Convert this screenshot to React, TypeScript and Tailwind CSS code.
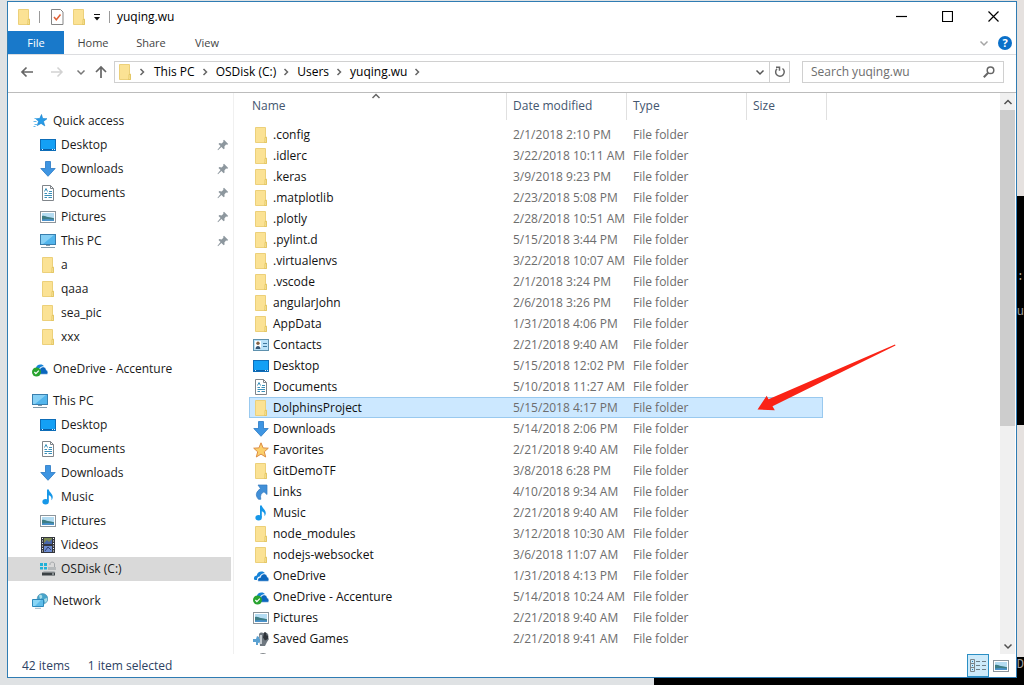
import React from "react";

type IconName =
  | "folder"
  | "desktop"
  | "downloads"
  | "documents"
  | "pictures"
  | "pc"
  | "star"
  | "favorites"
  | "onedrive"
  | "onedriveSync"
  | "music"
  | "videos"
  | "disk"
  | "network"
  | "contacts"
  | "links"
  | "games"
  | "search";

const cloud = (
  <>
    <path d="M1 11.5C.6 9 2.200 7.500 3.800 7.400 4.200 4.500 7 2.800 9.700 3.600c1 .3 1.800 .9 2.300 1.600-2.600-.2-4.600 1.200-5.200 3.300C4.900 8.800 3.900 10 4 12H2.200Z" fill="#1683d8" />
    <path d="M5 13.200c-.7-1.700 .3-3.600 2.500-3.700C7.900 7 9.700 5.800 11.600 6.100c1.600 .3 2.500 1.500 2.600 3 1.700 .5 2.200 2.900 1.100 4.100Z" fill="#0b66bd" stroke="#fff" strokeWidth=".4" />
  </>
);

const drawings: Record<IconName, React.ReactNode> = {
  folder: (
    <>
      <path d="M2.500.5h10v9.500h1v5.500h-11Z" fill="#fbe294" stroke="#ecd07a" />
      <path d="M12 10.500h1.500v5h-2l.5-1.500Z" fill="#fdeaa6" stroke="#dfc25c" strokeWidth=".8" />
    </>
  ),
  desktop: (
    <>
      <rect x=".5" y="2.500" width="15" height="11" fill="#14a0f5" stroke="#0d6db8" />
      <path d="M1 12.500h14" stroke="#0a5fa8" />
      <path d="M2 12.500h1M12 12.500h1M14 12.500h1" stroke="#d5efff" />
    </>
  ),
  downloads: <path d="M5.500.5h5v7h4.700L8 15.300.8 7.500h4.700Z" fill="#3e95e2" stroke="#2878c4" strokeWidth=".8" />,
  documents: (
    <>
      <path d="M2.500.5h8l3 3v12h-11Z" fill="#fff" stroke="#80858a" />
      <path d="M10.500.5v3h3" fill="none" stroke="#80858a" />
      <path d="M4.500 6.500 6 3.500 7.500 6.500M9 6.500h3M4.500 8.500h2.500M8.500 8.500H12M4.500 10.500h7.500M4.500 12.500h2.500M8.500 12.500H12" fill="none" stroke="#3b8fb8" />
    </>
  ),
  pictures: (
    <>
      <rect x=".5" y="2.500" width="15" height="11" fill="#fff" stroke="#8c959c" />
      <rect x="2" y="4" width="12" height="8" fill="#b4dcf2" />
      <path d="M2 7c2-1 4 .5 6 1 2 .2 4 .8 6 1.200V12H2Z" fill="#3d7d85" />
      <path d="M2 10.500c4-.9 8-.6 12 0V12H2Z" fill="#4b93cc" />
    </>
  ),
  pc: (
    <>
      <rect x=".5" y="1.500" width="15" height="10" fill="#52b5ec" stroke="#397fae" />
      <path d="M1 2h13L3 11H1Z" fill="#86d0f5" />
      <path d="M6 12.500h4M1 14.500h14" stroke="#8299a8" />
    </>
  ),
  star: (
    <>
      <path d="m9.500 1.500 1.200 4 4.300.2-3.500 2.700 1.300 4.500-3.700-2.500-3.900 2.200 1.400-4.300-3-2.700 4.100-.1Z" fill="#269be8" stroke="#187fca" strokeWidth=".6" />
      <path d="M2.500 5.500h3M1.500 8.500h3M2.500 11.500h3M1.500 13.500h2" stroke="#65b8ec" />
    </>
  ),
  favorites: <path d="m8 .8 2.100 5.100 5.200.3-4 3.600 1.400 5.200L8 12.100 3.300 15l1.400-5.200-4-3.600 5.200-.3Z" fill="#fbd06b" stroke="#dd8d43" />,
  onedrive: cloud,
  onedriveSync: (
    <>
      {cloud}
      <circle cx="4.500" cy="11" r="4.500" fill="#28a32f" />
      <path d="m2.400 11 1.500 1.700 2.900-3" fill="none" stroke="#fff" strokeWidth="1.200" />
    </>
  ),
  music: (
    <>
      <path d="M7 .5h1.800c.3 3 4.500 4.200 3.900 8.200-.2 1.100-.7 2-1.300 2.500.6-3-.9-4.300-2.600-4.900v6.200H7Z" fill="#1697e8" />
      <ellipse cx="5.600" cy="12.700" rx="3.200" ry="2.700" fill="#1697e8" />
    </>
  ),
  videos: (
    <>
      <rect x="1" y="0" width="14" height="16" fill="#34363d" />
      <path d="M2.500 1v14M13.500 1v14" stroke="#fff" strokeDasharray="1 1.500" />
      <rect x="4" y="1" width="8" height="6" fill="#7c8a52" />
      <path d="M4 6l3-3 2 2 3-3v5H4Z" fill="#4a66a8" />
      <rect x="4" y="9" width="8" height="6" fill="#6d8bd0" />
      <path d="m5 14 3-4 3 3" fill="none" stroke="#33406b" />
    </>
  ),
  disk: (
    <>
      <path d="M0 2h3v3H0ZM4 2h3v3H4ZM0 6h3v2.500H0ZM4 6h3v2.500H4Z" fill="#22b1d8" />
      <path d="M10 4V3c0-2.500 4.500-2.500 4.500 0v3" fill="none" stroke="#a2a6a9" />
      <rect x="8" y="6" width="8" height="3" fill="#b5b9bb" />
      <path d="M2 11.500 4 10h10l2 1.500Z" fill="#b2b6b8" />
      <rect x="2" y="11.500" width="13" height="3" fill="#3b4144" />
      <path d="M12 13h2" stroke="#d3dadd" />
    </>
  ),
  network: (
    <>
      <circle cx="10.500" cy="5.800" r="5.300" fill="#48a5cb" stroke="#4a8dad" strokeWidth=".6" />
      <path d="M7 2.500c2-2 4 0 3 2.500L8 6ZM12 6l3-1v3l-2 2Z" fill="#a8dde8" />
      <path d="M.5 6.500h11v7H.5Z" fill="#5fbdea" stroke="#2d89bb" />
      <path d="M1 7h8l-6 6H1Z" fill="#8ad6f5" />
      <path d="M3 15.300h6" stroke="#9ab4c2" />
    </>
  ),
  contacts: (
    <>
      <rect x=".5" y="2.500" width="15" height="11" fill="#b9e2f8" stroke="#5e91ae" />
      <rect x="2" y="4" width="6" height="8" fill="#fff" />
      <circle cx="5" cy="6.300" r="1.700" fill="#826346" />
      <path d="M2.500 12c0-4 5-4 5 0Z" fill="#355675" />
      <path d="M10 6.500h4M10 9.500h4" stroke="#3f789e" />
    </>
  ),
  links: <path d="M5 1h9v9.500l-3-2.700c-3 1.200-4 3.800-3.200 7.500H5.500C1.500 11 3.600 7.300 7.500 4.600Z" fill="#418fd7" stroke="#3179be" strokeWidth=".7" />,
  games: (
    <>
      <path d="M6 3c2-3 5-1 6 0l2-1 1.500 2-1 2 1.500 2-2 3-2 4H7Z" fill="#6f7880" />
      <path d="M11 1.500c3-1 3 2 2 3 3-1 3 3 1 4l-2 1-2-3Z" fill="#2f343a" />
      <path d="M0 8h3l1-3 2 1v2l2-1v4l-3 1v2H3v-3H0Z" fill="#5aa0d0" />
      <path d="M7 4h2v9H7Z" fill="#c5cbd0" />
    </>
  ),
  search: <circle cx="10" cy="7.500" r="6" fill="#f4f8fa" stroke="#80868a" />,
};

function Icon({ name }: { name: IconName }) {
  return (
    <svg viewBox="0 0 16 16" className="size-4 shrink-0" aria-hidden="true">
      {drawings[name]}
    </svg>
  );
}

function Chevron({ dir, className = "" }: { dir: "up" | "down" | "right"; className?: string }) {
  const d = { up: "M1.500 7 5 3.500 8.500 7", down: "M1.500 3.500 5 7 8.500 3.500", right: "M3.500 2 6.500 5 3.500 8" }[dir];
  return (
    <svg viewBox="0 0 10 10" className={`size-[10px] shrink-0 ${className}`} fill="none" stroke="currentColor" strokeWidth="1.500" aria-hidden="true">
      <path d={d} />
    </svg>
  );
}

function Pin() {
  return (
    <svg viewBox="0 0 12 12" className="size-3 shrink-0" aria-hidden="true">
      <path d="m7 .8 4.200 4.200-1 .8-1.200-.2-1.600 1.800.2 2.100-.9.8-2.300-2.300L1 11.200l-.5-.4 3-3.700L1.500 4.900l.9-.8 2.200.3 1.800-1.600-.2-1.200Z" fill="#8d979e" />
    </svg>
  );
}

type Node = { icon: IconName; label: string; pinned?: boolean; selected?: boolean };
const tree: { root: Node; children: Node[] }[] = [
  {
    root: { icon: "star", label: "Quick access" },
    children: [
      { icon: "desktop", label: "Desktop", pinned: true },
      { icon: "downloads", label: "Downloads", pinned: true },
      { icon: "documents", label: "Documents", pinned: true },
      { icon: "pictures", label: "Pictures", pinned: true },
      { icon: "pc", label: "This PC", pinned: true },
      { icon: "folder", label: "a" },
      { icon: "folder", label: "qaaa" },
      { icon: "folder", label: "sea_pic" },
      { icon: "folder", label: "xxx" },
    ],
  },
  { root: { icon: "onedriveSync", label: "OneDrive - Accenture" }, children: [] },
  {
    root: { icon: "pc", label: "This PC" },
    children: [
      { icon: "desktop", label: "Desktop" },
      { icon: "documents", label: "Documents" },
      { icon: "downloads", label: "Downloads" },
      { icon: "music", label: "Music" },
      { icon: "pictures", label: "Pictures" },
      { icon: "videos", label: "Videos" },
      { icon: "disk", label: "OSDisk (C:)", selected: true },
    ],
  },
  { root: { icon: "network", label: "Network" }, children: [] },
];

const files: [IconName, string, string][] = [
  ["folder", ".config", "2/1/2018 2:10 PM"],
  ["folder", ".idlerc", "3/22/2018 10:11 AM"],
  ["folder", ".keras", "3/9/2018 9:23 PM"],
  ["folder", ".matplotlib", "2/23/2018 5:08 PM"],
  ["folder", ".plotly", "2/28/2018 10:51 AM"],
  ["folder", ".pylint.d", "5/15/2018 3:44 PM"],
  ["folder", ".virtualenvs", "3/22/2018 10:07 AM"],
  ["folder", ".vscode", "2/1/2018 3:24 PM"],
  ["folder", "angularJohn", "2/6/2018 3:26 PM"],
  ["folder", "AppData", "1/31/2018 4:06 PM"],
  ["contacts", "Contacts", "2/21/2018 9:40 AM"],
  ["desktop", "Desktop", "5/15/2018 12:02 PM"],
  ["documents", "Documents", "5/10/2018 11:27 AM"],
  ["folder", "DolphinsProject", "5/15/2018 4:17 PM"],
  ["downloads", "Downloads", "5/14/2018 2:06 PM"],
  ["favorites", "Favorites", "2/21/2018 9:40 AM"],
  ["folder", "GitDemoTF", "3/8/2018 6:28 PM"],
  ["links", "Links", "4/10/2018 9:34 AM"],
  ["music", "Music", "2/21/2018 9:40 AM"],
  ["folder", "node_modules", "3/12/2018 10:30 AM"],
  ["folder", "nodejs-websocket", "3/6/2018 11:07 AM"],
  ["onedrive", "OneDrive", "1/31/2018 4:13 PM"],
  ["onedriveSync", "OneDrive - Accenture", "5/14/2018 10:24 AM"],
  ["pictures", "Pictures", "2/21/2018 9:40 AM"],
  ["games", "Saved Games", "2/21/2018 9:41 AM"],
];

function TreeItem({ node, nested }: { node: Node; nested?: boolean }) {
  return (
    <a
      href="#"
      className={`flex h-6 items-center gap-[5px] pr-[2px] whitespace-nowrap ${nested ? "pl-8" : "pl-6"} ${node.selected ? "bg-[#d9d9d9]" : ""}`}
    >
      <Icon name={node.icon} />
      <span className="flex-1">{node.label}</span>
      {node.pinned && <Pin />}
    </a>
  );
}

function TitleBar() {
  return (
    <header className="flex h-[29px] shrink-0 items-center pl-2">
      <button aria-label="Folder menu"><Icon name="folder" /></button>
      <span className="ml-[7px] h-3 w-px bg-[#9a9a9a]" />
      <button aria-label="Properties" className="ml-[9px]">
        <svg viewBox="0 0 16 16" className="size-4" aria-hidden="true">
          <path d="M2.500.5h9l2.500 2.500v12.500H2.500Z" fill="#fff" stroke="#858585" />
          <path d="m5 8 2.300 2.800L11.500 5.500" fill="none" stroke="#df6238" strokeWidth="1.500" />
        </svg>
      </button>
      <button aria-label="New folder" className="ml-[6px]"><Icon name="folder" /></button>
      <button aria-label="Customize toolbar" className="ml-[6px]">
        <svg viewBox="0 0 8 8" className="size-2" aria-hidden="true">
          <path d="M1 1.500h6" stroke="#111" />
          <path d="M1 4h6L4 7.500Z" fill="#111" />
        </svg>
      </button>
      <span className="ml-[8px] h-3 w-px bg-[#9a9a9a]" />
      <h1 className="ml-[7px] flex-1 text-black">yuqing.wu</h1>
      <div className="flex text-black">
        {[
          ["Minimize", "M0 5.500h11"],
          ["Maximize", "M.5.5h10v10H.5Z"],
          ["Close", "m.5.5 10 10m0-10-10 10"],
        ].map(([label, d]) => (
          <button key={label} aria-label={label} className="flex h-[27px] w-[46px] items-center justify-center">
            <svg viewBox="0 0 11 11" className="size-[11px]" fill="none" stroke="currentColor" aria-hidden="true">
              <path d={d} strokeWidth="1.200" />
            </svg>
          </button>
        ))}
      </div>
    </header>
  );
}

function NavBar() {
  return (
    <div className="flex h-[38px] shrink-0 items-center border-b border-[#bcbcbc] pt-1 pr-3 pb-[7px] pl-3">
      <button aria-label="Back" className="text-[#666]">
        <svg viewBox="0 0 14 12" className="h-3 w-[14px]" fill="none" stroke="currentColor" strokeWidth="1.700"><path d="M13 6H2M6.500 1.500 2 6l4.500 4.500" /></svg>
      </button>
      <button aria-label="Forward" className="ml-4 text-[#d2d2d2]">
        <svg viewBox="0 0 14 12" className="h-3 w-[14px]" fill="none" stroke="currentColor" strokeWidth="1.500"><path d="M1 6h11M7.500 1.500 12 6l-4.500 4.500" /></svg>
      </button>
      <button aria-label="Recent locations" className="ml-[12px] text-[#777]"><Chevron dir="down" className="size-2" /></button>
      <button aria-label="Up" className="ml-[9px] text-[#666]">
        <svg viewBox="0 0 12 14" className="h-[14px] w-3" fill="none" stroke="currentColor" strokeWidth="1.700"><path d="M6 13V2M1 7l5-5 5 5" /></svg>
      </button>
      <nav aria-label="Address" className="ml-[7px] flex h-[22px] flex-1 items-center border border-[#d0d0d0] pl-[2px] text-black">
        <Icon name="folder" />
        <Chevron dir="right" className="mr-[3px] ml-1 text-[#666]" />
        {["This PC", "OSDisk (C:)", "Users", "yuqing.wu"].map((part) => (
          <React.Fragment key={part}>
            <button className="ml-1 whitespace-nowrap">{part}</button>
            <Chevron dir="right" className="mr-[2px] ml-[5px] text-[#666]" />
          </React.Fragment>
        ))}
        <span className="flex-1" />
        <button aria-label="Previous locations" className="px-1 text-[#555]"><Chevron dir="down" /></button>
        <button aria-label="Refresh" className="flex h-full w-5 items-center justify-center border-l border-[#d0d0d0] text-[#666]">
          <svg viewBox="0 0 12 12" className="size-3" fill="none" stroke="currentColor" strokeWidth="1.500"><path d="M3 2.800A4.300 4.300 0 1 0 8.500 2.500M2 1.200h3.500v3.600" /></svg>
        </button>
      </nav>
      <label className="ml-3 flex h-[22px] w-[202px] items-center border border-[#d0d0d0] px-2">
        <input aria-label="Search yuqing.wu" placeholder="Search yuqing.wu" className="min-w-0 flex-1 bg-transparent outline-none placeholder:text-[#6d6d6d]" />
        <svg viewBox="0 0 12 12" className="size-3 text-[#666]" fill="none" stroke="currentColor" strokeWidth="1.500" aria-hidden="true"><circle cx="7.500" cy="4.300" r="3.300" /><path d="M5.200 6.800.8 11.200" strokeWidth="2" /></svg>
      </label>
    </div>
  );
}

function FileTable() {
  const head = "h-[27px] border-r border-[#e0e0e0] p-0 pb-[2px] text-left font-normal text-[#43566f]";
  return (
    <table className="ml-[15px] w-[578px] table-fixed border-separate border-spacing-0 whitespace-nowrap">
      <colgroup>
        <col className="w-[258px]" />
        <col className="w-[120px]" />
        <col className="w-[120px]" />
        <col className="w-[76px]" />
        <col className="w-[4px]" />
      </colgroup>
      <thead>
        <tr>
          <th className={`${head} relative pl-[3px]`}>
            Name
            <Chevron dir="up" className="absolute top-[-2px] left-[122px] text-[#666]" />
          </th>
          <th className={`${head} pl-[6px]`}>Date modified</th>
          <th className={`${head} pl-[6px]`}>Type</th>
          <th colSpan={2} className={`${head} pl-[6px]`}>Size</th>
        </tr>
        <tr><td colSpan={5} className="h-1 p-0" /></tr>
      </thead>
      <tbody>
        {files.map(([icon, name, date]) => {
          const on = name === "DolphinsProject";
          const cell = on ? "border-y border-[#99c9ef] bg-[#cce8ff]" : "";
          return (
            <tr key={name} aria-selected={on}>
              <td className={`h-[21px] p-0 text-[#111] ${cell} ${on ? "border-l pl-[3px]" : "pl-1"}`}>
                <div className="flex items-center gap-1"><Icon name={icon} />{name}</div>
              </td>
              <td className={`p-0 pl-[6px] text-[#6d6d6d] ${cell}`}>{date}</td>
              <td className={`p-0 pl-[6px] text-[#6d6d6d] ${cell}`}>File folder</td>
              <td className={`p-0 ${cell} ${on ? "border-r" : ""}`} />
              <td className="p-0" />
            </tr>
          );
        })}
        <tr><td colSpan={5} className="h-[21px] p-0 pl-1"><Icon name="search" /></td></tr>
      </tbody>
    </table>
  );
}

function ScrollBar() {
  return (
    <div className="mr-px flex w-[15px] shrink-0 flex-col bg-[#f0f0f0] text-[#505050]">
      <button aria-label="Scroll up" className="flex h-[17px] items-center justify-center"><Chevron dir="up" /></button>
      <div className="grow-[316] basis-0 bg-[#cdcdcd]" />
      <div className="grow-[211] basis-0" />
      <button aria-label="Scroll down" className="flex h-[17px] items-center justify-center"><Chevron dir="down" /></button>
    </div>
  );
}

function Backdrop() {
  return (
    <div className="absolute inset-0 overflow-hidden bg-[#dfe2e4]" aria-hidden="true">
      <div className="absolute inset-y-0 right-0 w-20 bg-[#e5e1df]" />
      <div className="absolute top-[196px] right-0 h-[229px] w-20 bg-black font-['Liberation_Mono',monospace] text-[12px] text-[#a0a0a0]">
        <span className="absolute top-[73px] right-0">::</span>
        <span className="absolute top-[108px] right-0">lu</span>
      </div>
      <div className="absolute right-0 bottom-0 left-[654px] h-[28px] bg-black font-['Liberation_Mono',monospace] text-[12px] text-[#a0a0a0]">
        <span className="absolute top-0 right-0">D</span>
      </div>
    </div>
  );
}

export default function App() {
  return (
    <div className="relative flex h-screen flex-col overflow-hidden pt-px pr-[7px] pb-[7px] pl-[7px] font-['Open_Sans','Noto_Sans',sans-serif] text-[12px] leading-4 text-[#1a1a1a]">
      <Backdrop />
      <main className="relative flex min-h-0 flex-1 flex-col border border-[#2f7cb3] bg-white">
        <TitleBar />
        <div className="flex h-6 shrink-0 items-center border-b border-[#dcdde0] pr-1 text-[11px] text-[#444]">
          <button className="h-full w-14 bg-[#1979ca] text-white">File</button>
          <button className="w-[58px]">Home</button>
          <button className="w-[58px]">Share</button>
          <button className="w-[54px]">View</button>
          <span className="flex-1" />
          <button aria-label="Expand ribbon" className="mr-[9px] text-[#a5a5a5]"><Chevron dir="down" /></button>
          <button aria-label="Help" className="flex size-[14px] items-center justify-center rounded-full bg-[#0b70c9] text-[11px] font-bold text-white">?</button>
        </div>
        <NavBar />
        <div className="flex min-h-0 flex-1">
          <aside className="flex w-[226px] shrink-0 flex-col gap-2 overflow-hidden border-r border-[#f0f0f0] pt-4 pr-[2px]">
            {tree.map(({ root, children }) => (
              <div key={root.label}>
                <TreeItem node={root} />
                {children.map((node) => <TreeItem key={node.label} node={node} nested />)}
              </div>
            ))}
          </aside>
          <section className="relative min-w-0 flex-1 overflow-hidden">
            <FileTable />
            <svg viewBox="0 0 140 68" className="absolute top-[251px] left-[523px] h-[68px] w-[140px]" aria-hidden="true">
              <path d="M.5 65.500 9.700 51.700l1.800 3.600L138 .5l.5 1L15.500 62.300l2.300 4Z" fill="#fa2316" />
            </svg>
          </section>
          <ScrollBar />
        </div>
        <footer className="flex h-[23px] shrink-0 items-center gap-[18px] pl-[14px] text-[#2d4263]">
          <span>42 items</span>
          <span>1 item selected</span>
          <span className="flex-1" />
          <div className="flex items-center self-stretch pr-[7px]">
            <button aria-label="Details view" className="flex h-full w-[22px] items-center justify-center border border-[#2b8fc4] bg-[#cdeafa]">
              <svg viewBox="0 0 16 14" className="h-[14px] w-4" fill="none" aria-hidden="true">
                <path d="M.5.5h4v12h-4ZM.5 4.500h4M.5 8.500h4" stroke="#7c858a" />
                <path d="M2 2.500h1M2 6.500h1M2 10.500h1" stroke="#2f7fb0" />
                <path d="M6 2.500h4M12 2.500h4M6 6.500h4M12 6.500h4M6 10.500h4M12 10.500h4" stroke="#6d7e88" />
              </svg>
            </button>
            <button aria-label="Thumbnail view" className="ml-1 h-4"><Icon name="pictures" /></button>
          </div>
        </footer>
      </main>
    </div>
  );
}
